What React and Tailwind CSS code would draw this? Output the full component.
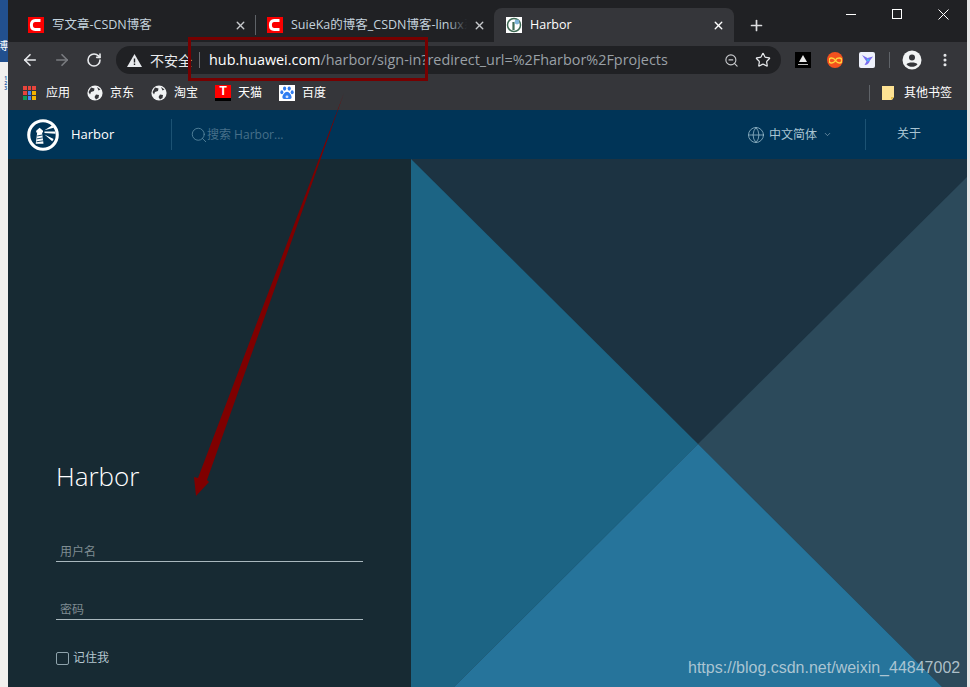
import { ArrowLeft, ArrowRight, RotateCw, Search, Star, X, Plus, ZoomOut, MoreVertical, ChevronDown, Globe } from 'lucide-react'

const sans = 'font-["Open_Sans","Noto_Sans_CJK_SC",sans-serif]'

function CsdnIcon() {
  return (
    <svg width="16" height="16" viewBox="0 0 16 16" className="shrink-0">
      <rect width="16" height="16" fill="#fc0000" />
      <path d="M12.5 3.6H7.2Q3.4 3.6 3.4 8T7.2 12.4H12.5" fill="none" stroke="#fff" strokeWidth="3" />
    </svg>
  )
}

function HarborFavicon() {
  return (
    <svg width="16" height="16" viewBox="0 0 16 16" className="shrink-0">
      <rect width="16" height="16" fill="#fff" />
      <circle cx="8" cy="8" r="6.5" fill="none" stroke="#3f6b55" strokeWidth="1.5" />
      <rect x="6.4" y="5" width="2.2" height="8" fill="#3f6b55" />
      <circle cx="11" cy="5" r="2.4" fill="#7fb4d8" />
    </svg>
  )
}

function Tab({ icon, title, active, className, fade }) {
  return (
    <div className={`flex items-center h-[34px] ${active ? 'bg-[#35363a] rounded-t-lg text-white' : 'text-[#c4d3de]'} ${className}`}>
      {icon}
      <div className="relative ml-2 flex-1 overflow-hidden mr-[6px]">
        <span className="block text-[12.5px] whitespace-nowrap">{title}</span>
        {fade && <div className="absolute inset-y-0 right-0 w-[20px] bg-gradient-to-l from-[#202124] to-transparent" />}
      </div>
      <X size={13} strokeWidth={2.6} className={active ? 'text-white shrink-0' : 'text-[#c7c9cc] shrink-0'} />
    </div>
  )
}

function Bookmark({ icon, label, className = 'gap-[7px] mr-[17px]' }) {
  return (
    <div className={`flex items-center ${className}`}>
      {icon}
      <span className="text-[12px] text-white">{label}</span>
    </div>
  )
}

function GlobeIcon() {
  return (
    <svg width="16" height="16" viewBox="0 0 16 16" className="shrink-0">
      <circle cx="8" cy="8" r="7.6" fill="#f1f3f4" />
      <path d="M4 2.5L7.5 3.5 7 6 4 7 3 9.5 1.5 7ZM9 9.5L12 10 11.5 13 9 14.5 7.5 12ZM10 2L13.5 4.5 11.5 5.5Z" fill="#35363a" />
    </svg>
  )
}

function AppsIcon() {
  const colors = ['#e8453c', '#e8453c', '#e8453c', '#e8453c', '#4285f4', '#f4b400', '#0f9d58', '#4285f4', '#f4b400']
  return (
    <div className="grid grid-cols-3 gap-[1px] w-[13px] shrink-0">
      {colors.map((c, i) => (
        <div key={i} className="h-[4px] w-[3.6px]" style={{ backgroundColor: c }} />
      ))}
    </div>
  )
}

function TmallIcon() {
  return (
    <div className="w-[16px] h-[16px] bg-[#ff0000] flex items-start justify-center overflow-hidden relative shrink-0">
      <span className="text-white font-bold text-[12px] leading-[12px] font-['Liberation_Sans',sans-serif]">T</span>
      <div className="absolute bottom-0 inset-x-0 h-[3px] bg-black" />
    </div>
  )
}

function BaiduIcon() {
  return (
    <svg width="16" height="16" viewBox="0 0 16 16" className="shrink-0">
      <rect width="16" height="16" fill="#fff" />
      <g fill="#2f7cf0">
        <ellipse cx="5.6" cy="3.6" rx="1.6" ry="2.1" />
        <ellipse cx="10.2" cy="3.6" rx="1.6" ry="2.1" />
        <ellipse cx="2.8" cy="7.2" rx="1.5" ry="2" />
        <ellipse cx="13.2" cy="7.2" rx="1.5" ry="2" />
        <path d="M8 6.8C5.8 6.8 3.4 10 3.4 12.2 3.4 14.6 6.4 14 8 14S12.6 14.6 12.6 12.2C12.6 10 10.2 6.8 8 6.8Z" />
      </g>
      <rect x="6.6" y="10.4" width="2.8" height="2.6" rx="1" fill="#cfe2ff" />
    </svg>
  )
}

function Lighthouse() {
  return (
    <svg width="32" height="32" viewBox="0 0 33 33" className="shrink-0">
      <circle cx="16.5" cy="16.5" r="14.7" fill="none" stroke="#fff" strokeWidth="3.2" />
      <path d="M9 25.5L10.5 14H9.5V12.2L13 9 16.5 12.2V14H15.5L17 25.5Z" fill="#fff" />
      <path d="M10.5 17.5L15.8 16.5M10.2 20.5L16.2 19.5M9.8 23.5L16.6 22.5" stroke="#003457" strokeWidth="0.9" />
      <path d="M18 11.5L26 6.5 27.5 9ZM18 13H29.2V15.2L18 14.4ZM18 16L27.5 20.5 26 23Z" fill="#fff" />
    </svg>
  )
}

function Field({ label, className }) {
  return (
    <div className={`w-[307px] border-b border-[#a9b8be] h-[21px] flex items-end pl-[4px] pb-[1px] ${className}`}>
      <span className="text-[12px] leading-[17px] text-[#7f8c92]">{label}</span>
    </div>
  )
}

export default function App() {
  return (
    <div className={`relative w-[970px] h-[687px] overflow-hidden flex bg-[#f1f1f1] ${sans}`}>
      {/* whatever window sits behind the browser */}
      <div className="w-[8px] shrink-0 flex flex-col bg-[#f1f0ee] overflow-hidden">
        <div className="h-[62px] bg-[#22508f] flex items-center justify-end text-white text-[11px] whitespace-nowrap pt-[30px]">博</div>
        <div className="flex flex-col items-end pr-[1px] pt-[14px] text-[5px] leading-[5px] text-[#2a62a8] font-bold">
          <span>1</span>
          <span>2</span>
          <span>3</span>
        </div>
      </div>

      <div className="w-[959px] shrink-0 flex flex-col">
        {/* tab strip */}
        <div className="h-[42px] bg-[#202124] flex items-end pl-[20px] relative">
          <Tab icon={<CsdnIcon />} title="写文章-CSDN博客" className="w-[219px] shrink-0" />
          <div className="w-px h-[20px] bg-[#5f6368] ml-[8px] mb-[7px] shrink-0" />
          <Tab icon={<CsdnIcon />} title="SuieKa的博客_CSDN博客-linux系统" className="w-[219px] ml-[11px] shrink-0" fade />
          <Tab icon={<HarborFavicon />} title="Harbor" active className="w-[240px] pl-[12px] pr-[9px] ml-[8px] shrink-0" />
          <Plus size={17} strokeWidth={2.4} className="text-[#dcdddf] ml-[14px] mb-[8px] shrink-0" />
          <div className="absolute right-[1px] top-0 flex text-white">
            <div className="w-[46px] h-[28px] flex items-center justify-center"><div className="w-[10px] h-px bg-white" /></div>
            <div className="w-[46px] h-[28px] flex items-center justify-center"><div className="w-[10px] h-[10px] border border-white" /></div>
            <div className="w-[46px] h-[28px] flex items-center justify-center">
              <svg width="11" height="11" viewBox="0 0 11 11"><path d="M.5.5L10.5 10.5M10.5.5L.5 10.5" stroke="#fff" strokeWidth="1" /></svg>
            </div>
          </div>
        </div>

        {/* toolbar */}
        <div className="h-[36px] bg-[#35363a] flex items-center pl-[13px]">
          <ArrowLeft size={18} strokeWidth={2.2} className="text-[#e8eaed] shrink-0" />
          <ArrowRight size={18} strokeWidth={2.2} className="text-[#7a7c80] shrink-0 ml-[14px]" />
          <RotateCw size={16} strokeWidth={2.4} className="text-[#e8eaed] shrink-0 ml-[15px]" />
          <div className="ml-[14px] w-[665px] h-[28px] rounded-full bg-[#202124] flex items-center pl-[11px] pr-[10px] shrink-0">
            <svg width="15" height="13" viewBox="0 0 15 13" className="shrink-0">
              <path d="M7.5 0L15 13H0Z" fill="#e8eaed" />
              <path d="M6.8 4.4H8.2V8.6H6.8ZM6.8 9.6H8.2V11H6.8Z" fill="#202124" />
            </svg>
            <span className="text-[14px] text-[#e8eaed] ml-[8px] whitespace-nowrap">不安全</span>
            <div className="w-px h-[16px] bg-[#6b6e72] ml-[7px] mr-[9px] shrink-0" />
            <span className="text-[14.4px] whitespace-nowrap text-[#9aa0a6]"><span className="text-white font-medium">hub.huawei.com</span>/harbor/sign-in?redirect_url=%2Fharbor%2Fprojects</span>
            <ZoomOut size={15} strokeWidth={1.8} className="text-[#c8cacd] ml-auto shrink-0" />
            <Star size={16} strokeWidth={1.8} className="text-[#e8eaed] ml-[16px] shrink-0" />
          </div>
          <div className="flex items-center ml-[14px]">
            <div className="w-[16px] h-[16px] bg-black flex flex-col items-center justify-center">
              <div className="w-0 h-0 border-x-[4px] border-x-transparent border-b-[7px] border-b-[#e8e8e8]" />
              <div className="w-[10px] h-[1px] bg-[#bbb] mt-[2px]" />
            </div>
            <div className="w-[16px] h-[16px] rounded-full bg-[#f4511e] ml-[16px] flex items-center justify-center">
              <svg width="13" height="7" viewBox="0 0 13 7">
                <path d="M6.5 3.5C5 1 3.6 1 2.6 1A2.5 2.5 0 0 0 2.6 6C3.6 6 5 6 6.5 3.5S8 1 10.4 1A2.5 2.5 0 0 1 10.4 6C9.4 6 8 6 6.5 3.5Z" fill="none" stroke="#ffd33d" strokeWidth="1.4" />
              </svg>
            </div>
            <div className="w-[16px] h-[16px] rounded-[2px] bg-[#eef1fb] ml-[16px] flex items-center justify-center">
              <svg width="13" height="12" viewBox="0 0 13 12">
                <path d="M1 1L6.5 4 12 2.5 9 6.5Q7.5 11 3.5 11L5.5 7.5Z" fill="#7a6cf0" />
                <path d="M6.5 4L9 6.5 5.5 7.5Z" fill="#47b8f5" />
              </svg>
            </div>
            <div className="w-px h-[16px] bg-[#5f6368] ml-[14px]" />
            <svg width="20" height="20" viewBox="0 0 20 20" className="ml-[12px]">
              <circle cx="10" cy="10" r="9.5" fill="#f1f3f4" />
              <circle cx="10" cy="7.5" r="3" fill="#35363a" />
              <path d="M4.5 14.2C6 11.8 14 11.8 15.5 14.2 14 16 12 16.8 10 16.8S6 16 4.5 14.2Z" fill="#35363a" />
            </svg>
            <MoreVertical size={16} strokeWidth={2.6} className="text-[#e8eaed] ml-[15px]" />
          </div>
        </div>

        {/* bookmarks */}
        <div className="h-[32px] bg-[#35363a] flex items-center pl-[15px] pb-[2px]">
          <Bookmark icon={<AppsIcon />} label="应用" className="gap-[10px] mr-[17px]" />
          <Bookmark icon={<GlobeIcon />} label="京东" />
          <Bookmark icon={<GlobeIcon />} label="淘宝" />
          <Bookmark icon={<TmallIcon />} label="天猫" />
          <Bookmark icon={<BaiduIcon />} label="百度" />
          <div className="ml-auto flex items-center pr-[15px]">
            <div className="w-px h-[16px] bg-[#5f6368] mr-[12px]" />
            <svg width="12" height="14" viewBox="0 0 12 14" className="mr-[10px]">
              <path d="M0 0H12V11L10 14H0Z" fill="#fde293" />
              <path d="M9 14V11H12Z" fill="#e8c048" />
            </svg>
            <span className="text-[12px] text-white">其他书签</span>
          </div>
        </div>

        {/* harbor header */}
        <div className="h-[49px] bg-[#003457] flex items-center">
          <div className="w-[164px] flex items-center pl-[19px] h-[31px] border-r border-[#1c5273] shrink-0">
            <Lighthouse />
            <span className="text-[13px] text-white ml-[12px]">Harbor</span>
          </div>
          <Search size={18} strokeWidth={1.1} className="text-[#5d8ca3] ml-[18px] shrink-0" />
          <span className="text-[12px] text-[#47708a] whitespace-nowrap -ml-[1px]">搜索 Harbor...</span>
          <div className="ml-auto flex items-center h-[31px]">
            <Globe size={18} strokeWidth={1} className="text-[#9fc0d0]" />
            <span className="text-[12px] text-[#a9c4d2] ml-[4px]">中文简体</span>
            <ChevronDown size={9} strokeWidth={1.5} className="text-[#a5bfcc] ml-[6px]" />
            <div className="w-px h-full bg-[#1c5273] ml-[33px]" />
            <span className="text-[12px] text-[#a9c4d2] ml-[31px] mr-[46px] -mt-[2px]">关于</span>
          </div>
        </div>

        {/* login body */}
        <div className="flex-1 flex min-h-0">
          <div className="w-[403px] shrink-0 bg-[#172a33] flex flex-col pl-[48px] pt-[302px]">
            <div className="text-[26px] leading-[30px] font-light text-white">Harbor</div>
            <Field label="用户名" className="mt-[50px]" />
            <Field label="密码" className="mt-[37px]" />
            <div className="flex items-center gap-[4px] mt-[29px]">
              <div className="w-[13px] h-[13px] rounded-[2px] border border-[#8fa3ac]" />
              <span className="text-[12px] text-[#b4c6cf]">记住我</span>
            </div>
          </div>
          <svg className="flex-1 h-full block" viewBox="411 159 556 528" preserveAspectRatio="none">
            <rect x="411" y="159" width="556" height="528" fill="#1c3342" />
            <path d="M411 159L698 444 454 687H411Z" fill="#1c6484" />
            <path d="M967 177L698 444 942 687H967Z" fill="#2c4a5b" />
            <path d="M698 444L942 687H454Z" fill="#26749b" />
          </svg>
        </div>
      </div>

      <div className="flex-1 bg-[#e6e6e6]" />

      {/* annotations pasted on the screenshot */}
      <div className="absolute left-[188px] top-[37px] w-[240px] h-[44px] border-[3px] border-[#760000]" />
      <svg className="absolute inset-0 pointer-events-none" width="970" height="687">
        <path d="M344 93L207 480 209 482 196 496 194 477 198 478Z" fill="#7f0000" />
      </svg>
      <span className="absolute left-[688px] top-[658px] text-[16px] leading-[20px] text-[#c4d5dd]/85 whitespace-nowrap font-['Liberation_Sans',sans-serif]">https://blog.csdn.net/weixin_44847002</span>
    </div>
  )
}
